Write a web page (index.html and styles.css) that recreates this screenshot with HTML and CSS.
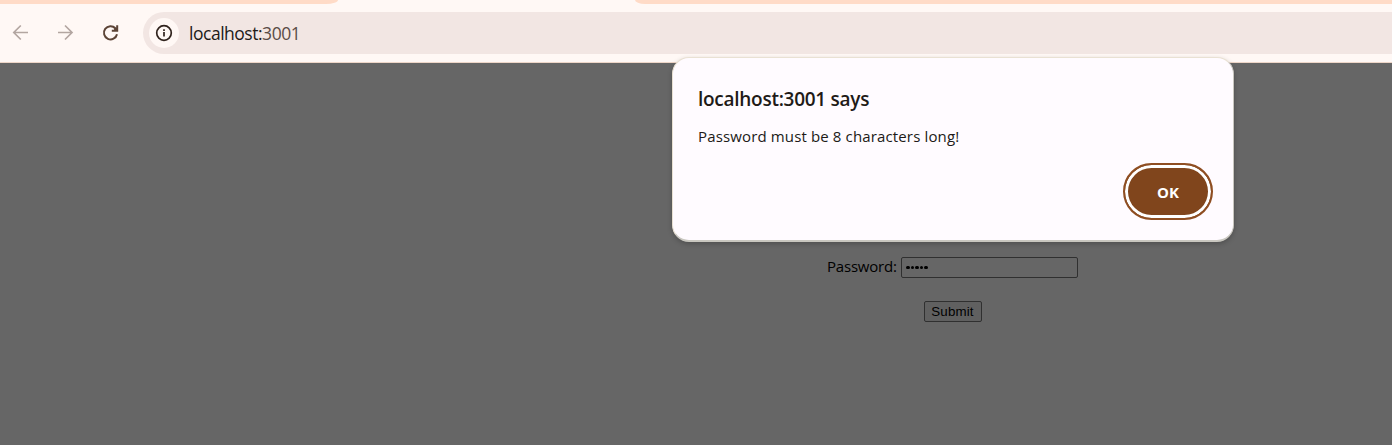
FILE: index.html
```
<!DOCTYPE html>
<html lang="en">
<head>
<meta charset="utf-8">
<title>localhost:3001</title>
<link rel="stylesheet" href="styles.css">
</head>
<body>
<div class="tabs"><div class="tabs-left"></div><div class="tabs-right"></div></div>
<header class="toolbar">
  <nav class="nav">
    <svg class="icon muted" viewBox="0 0 20 20"><path d="M18 9.500H3.800M10.800 2.500L3.800 9.500l7 7"/></svg>
    <svg class="icon muted" viewBox="0 0 20 20"><path d="M3 9.500h14M10 2.500l7 7-7 7"/></svg>
    <svg class="icon reload" viewBox="0 0 20 20"><path d="M17 11.200A6.600 6.600 0 1 1 15.400 5.300"/><path class="tip" d="M16.200 2.300H18.200V8.700H11.800V6.700H14.200L13.800 5.500L16.200 4.500Z"/></svg>
  </nav>
  <div class="address">
    <span class="site-info">
      <svg class="info" viewBox="0 0 18 18"><circle cx="9" cy="9" r="7.300"/><path d="M9 8v4.600M9 5.200v1.700"/></svg>
    </span>
    <span class="url">localhost:<span class="port">3001</span></span>
  </div>
</header>
<main class="page">
  <form class="form">
    <div class="row"><label class="label" for="pw">Password:</label><span class="field" id="pw"><i class="dot"></i><i class="dot"></i><i class="dot"></i><i class="dot"></i><i class="dot"></i></span></div>
    <button class="submit" type="button">Submit</button>
  </form>
</main>
<section class="dialog" role="alertdialog">
  <h1 class="title"><span>localhost:3001 says</span></h1>
  <p class="message"><span>Password must be 8 characters long!</span></p>
  <button class="ok" type="button">OK</button>
</section>
</body>
</html>
```
FILE: styles.css
```
* { box-sizing: border-box; }
body {
  margin: 0;
  height: 445px;
  overflow: hidden;
  display: flex;
  flex-direction: column;
  background: #666;
  font-family: "Open Sans", "Noto Sans", sans-serif;
}
.tabs { height: 4px; flex: none; display: flex; justify-content: space-between; background: #fff8f5; }
.tabs-left { width: 338px; background: #ffdbc7; border-bottom-right-radius: 12px 4px; }
.tabs-right { width: 757px; background: #ffdbc7; border-bottom-left-radius: 10px 4px; }
.toolbar {
  height: 59px;
  flex: none;
  display: flex;
  align-items: flex-start;
  padding-top: 8px;
  background: #fff8f5;
  border-bottom: 1px solid #eed6c8;
}
.nav { width: 143px; height: 42px; flex: none; display: flex; align-items: center; gap: 25px; padding-left: 10px; }
.icon { width: 20px; height: 20px; fill: none; stroke: #5c4436; stroke-width: 2; }
.muted { stroke: #b3a6a1; stroke-width: 1.7; }
.tip { fill: #5c4436; stroke: none; }
.address { flex: 1; height: 42px; display: flex; align-items: center; padding-left: 6px; background: #f2e6e3; border-radius: 21px 0 0 21px; }
.site-info { width: 30px; height: 30px; display: flex; align-items: center; justify-content: center; border-radius: 50%; background: #fff8f5; }
.info { width: 18px; height: 18px; fill: none; stroke: #30231d; stroke-width: 1.7; }
.url { margin-left: 10px; font-size: 17.5px; letter-spacing: -0.48px; color: #211a17; }
.port { color: #5a4c46; }
.page { flex: 1; padding-top: 194px; }
.form { width: 251px; margin-left: 827px; display: flex; flex-direction: column; align-items: center; gap: 23px; }
.row { width: 251px; height: 21px; display: flex; align-items: center; justify-content: space-between; }
.label { font-size: 15px; line-height: 19px; padding-bottom: 2px; letter-spacing: -0.2px; color: #000; white-space: nowrap; }
.field { width: 177px; height: 21px; display: flex; align-items: center; gap: 1px; padding-left: 4px; border: 1px solid #303030; border-radius: 2px; }
.dot { width: 3.6px; height: 3.6px; border-radius: 50%; background: #000; }
.submit { width: 58px; height: 21px; padding: 0; border: 1px solid #303030; border-radius: 2px; background: #606060; font: 13.333px "Liberation Sans", sans-serif; letter-spacing: 0.15px; color: #000; }
.dialog {
  position: absolute;
  left: 672px;
  top: 57px;
  width: 562px;
  height: 185px;
  padding: 28px 21px 21px 26px;
  display: flex;
  flex-direction: column;
  background: #fffbff;
  border: 1px solid #e9e1d3;
  border-right-color: #c9c7c0;
  border-bottom: 2px solid #c9c7c0;
  border-radius: 17px;
  box-shadow: 0 2px 5px rgba(0, 0, 0, 0.22);
}
.title { margin: 0 0 0 -1px; font-size: 19px; font-weight: 600; line-height: 26px; letter-spacing: -0.27px; color: #211a17; }
.message { margin: 13px 0 0 -1px; font-size: 15px; line-height: 22px; letter-spacing: 0.14px; color: #211a17; }
.ok { align-self: flex-end; margin: 16px -1px 0 0; width: 90px; height: 57px; padding: 0; flex: none; border: 2px solid #8f4e22; border-radius: 29px; box-shadow: inset 0 0 0 3px #fff; background: #80451c; color: #fff; font: 700 15px "Open Sans", sans-serif; }
```
